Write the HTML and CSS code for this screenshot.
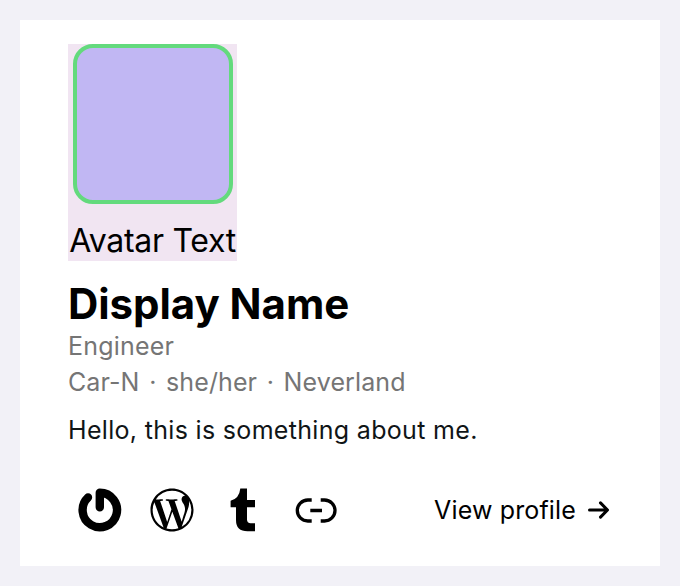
FILE: index.html
```html
<!DOCTYPE html>
<html lang="en">
<head>
<meta charset="utf-8">
<title>Profile</title>
<link rel="stylesheet" href="styles.css">
</head>
<body>
<main class="card">
  <div class="avatar">
    <div class="avatar-image"></div>
    <span class="avatar-text">Avatar Text</span>
  </div>
  <h1 class="name">Display Name</h1>
  <p class="meta">Engineer</p>
  <p class="meta place"><span>Car-N</span><span>·</span><span>she/her</span><span>·</span><span>Neverland</span></p>
  <p class="about">Hello, this is something about me.</p>
  <footer class="footer">
    <nav class="icons">
      <svg class="icon" viewBox="0 0 64 64"><path class="line" d="M31.8 29.2V14.8A17.2 17.2 0 1 1 20 19.5" stroke-width="8.4" stroke-linecap="round" stroke-linejoin="round"/></svg>
      <svg class="icon wordpress" viewBox="0 0 24 24"><path d="M12.158 12.786l-2.698 7.84c.806.236 1.657.365 2.54.365 1.047 0 2.051-.18 2.986-.51-.024-.037-.046-.078-.065-.123l-2.763-7.572zM3.009 12c0 3.559 2.068 6.634 5.067 8.092L3.788 8.341A8.932 8.932 0 0 0 3.009 12zm15.06-.454c0-1.112-.399-1.881-.741-2.48-.456-.741-.883-1.368-.883-2.109 0-.826.627-1.596 1.51-1.596l.116.007A8.963 8.963 0 0 0 12 3.009a8.982 8.982 0 0 0-7.512 4.052c.211.007.41.011.579.011.94 0 2.396-.114 2.396-.114.484-.028.541.684.057.741 0 0-.487.057-1.029.085l3.274 9.739 1.968-5.901-1.401-3.838c-.484-.028-.943-.085-.943-.085-.485-.029-.428-.769.057-.741 0 0 1.484.114 2.368.114.94 0 2.397-.114 2.397-.114.485-.028.542.684.057.741 0 0-.488.057-1.029.085l3.249 9.665.897-2.996c.456-1.169.684-2.137.684-2.907zm1.82-3.86c.039.286.06.593.06.924 0 .912-.171 1.938-.684 3.22l-2.746 7.94A8.984 8.984 0 0 0 20.991 12a8.94 8.94 0 0 0-1.102-4.314zM12 22C6.486 22 2 17.514 2 12S6.486 2 12 2s10 4.486 10 10-4.486 10-10 10z"/></svg>
      <svg class="icon" viewBox="0 0 64 64"><path d="M28.3 10.5H35V22H43V29.3H35V41.5Q35 45.2 38.7 45.2H43V53.3H35.5Q24 53.3 24 42V29.3H18.6V22.8Q27.3 20.5 28.3 10.5Z"/></svg>
      <svg class="icon" viewBox="0 0 64 64"><path class="line" d="M27.7 22H23.8A10.5 10.5 0 0 0 23.8 43H27.7M36.7 22H40.5A10.5 10.5 0 0 1 40.5 43H36.7M26.3 32.5H38" stroke-width="3.3"/></svg>
    </nav>
    <a class="profile"><span>View profile</span><svg class="arrow" viewBox="0 0 24 20"><path class="line" d="M1.5 10H19M12.5 2.9L19.5 10L12.5 17.1" stroke-width="3" stroke-linecap="round" stroke-linejoin="round"/></svg></a>
  </footer>
</main>
</body>
</html>
```
FILE: styles.css
```css
* { box-sizing: border-box; }
body { margin: 0; padding: 20px; background: #f2f1f7; font-family: Inter, "Liberation Sans", sans-serif; color: #000; }
.card { height: 546px; padding: 24px 48px; background: #fff; }
.avatar { width: 169px; height: 217px; background: #f1e5f2; display: flex; flex-direction: column; align-items: center; }
.avatar-image { width: 160px; height: 160px; border: 4px solid #63da7d; border-radius: 20px; background: #c1b7f3; }
.avatar-text { margin-top: 16px; font-size: 32px; line-height: 41px; letter-spacing: -0.3px; white-space: nowrap; }
.name { margin: 18px 0 0; font-size: 42px; line-height: 50px; font-weight: 700; letter-spacing: -0.05px; white-space: nowrap; }
.name + .meta { margin-top: -1px; }
.meta { margin: 0; font-size: 25px; line-height: 36px; letter-spacing: 0.2px; color: #757575; white-space: nowrap; }
.place { display: flex; gap: 9.6px; letter-spacing: 0.1px; }
.about { margin: 12px 0 0; font-size: 25px; line-height: 36px; letter-spacing: 0.32px; color: #101517; white-space: nowrap; }
.footer { display: flex; align-items: center; justify-content: space-between; height: 64px; margin-top: 30px; }
.icons { display: flex; gap: 8px; }
.icon { width: 64px; height: 64px; }
.wordpress { padding: 6.2px; }
.line { fill: none; stroke: #000; }
.profile { display: flex; align-items: center; gap: 12px; font-size: 25px; letter-spacing: 0.15px; white-space: nowrap; }
.arrow { width: 24px; height: 20px; }
```
